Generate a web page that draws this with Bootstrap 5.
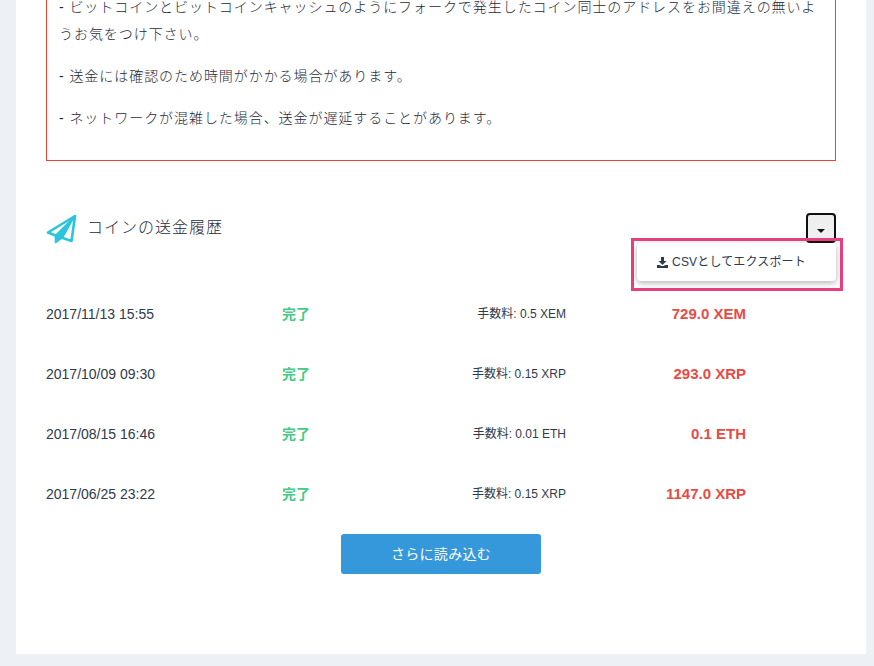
<!DOCTYPE html>
<html lang="ja">
<head>
<meta charset="utf-8">
<title>コインの送金履歴</title>
<link rel="stylesheet" href="https://cdn.jsdelivr.net/npm/bootstrap@5.3.0/dist/css/bootstrap.min.css">
<style>
html,body{height:666px;overflow:hidden}
body{background:#edf1f6;font-family:"Liberation Sans","Noto Sans CJK JP",sans-serif;color:#2f3a4a}
.sheet{background:#fff;margin:-40px 8px 0 16px;height:694px;padding:0 30px}
.notice{border:1px solid #ea4335;height:201px;padding:33px 12px 0;font-size:14px;letter-spacing:.94px;line-height:27px;font-weight:300;color:#1f2a3a}
.notice p{margin:0 0 15px}
.hist-head{height:71px;margin-top:52px;position:relative}
.hist-title{font-size:16px;letter-spacing:1px;margin-left:9px;margin-top:3px;color:#1f2a3a;font-weight:300;line-height:24px}
.caret-btn{width:30px;height:30px;background:#efefef;border:2px solid #111;border-radius:4px;padding:0;position:absolute;right:0;top:0}
.caret-btn::after{content:"";display:block;margin:5px auto 0;width:0;height:0;border-left:4px solid transparent;border-right:4px solid transparent;border-top:4px solid #111}
.highlight{position:absolute;left:585px;top:25px;width:212px;height:53px;border:3px solid #e8407f;z-index:2}
.csv-menu{position:absolute;left:3px;top:2px;width:199px;height:38px;background:#fff;border-radius:4px;box-shadow:0 2px 6px rgba(0,0,0,.3);font-size:12px;letter-spacing:.15px;color:#2f3a4a;padding-right:10px}
.tx-row{height:60px;font-size:14px;color:#2f3a4a}
.c-date{width:236px}
.c-status{width:100px;color:#46cb84;font-weight:700}
.c-fee{width:184px;text-align:right;font-size:12px}
.c-amt{width:180px;text-align:right;color:#ea4a45;font-weight:700;font-size:15px}
.more-btn{width:200px;height:40px;background:#3498db;border:0;border-radius:3px;color:#fff;font-size:14px;letter-spacing:.3px;margin-top:10px}
.more-btn:hover{background:#3498db;color:#fff}
</style>
</head>
<body>
<div class="sheet">
  <div class="notice">
    <p>- ビットコインとビットコインキャッシュのようにフォークで発生したコイン同士のアドレスをお間違えの無いようお気をつけ下さい。</p>
    <p>- 送金には確認のため時間がかかる場合があります。</p>
    <p>- ネットワークが混雑した場合、送金が遅延することがあります。</p>
  </div>
  <div class="hist-head d-flex align-items-start">
    <svg width="32" height="32" viewBox="0 0 32 32" fill="none" stroke="#2bc4dc" stroke-width="2.6" stroke-linejoin="round" aria-hidden="true">
      <path d="M29 3 L2 19.500 L9.500 22.500 L25.500 28 Z"/>
      <path d="M28 4 L9.500 22.500 L9.500 29.500 L16.500 24.500 Z" fill="#2bc4dc" stroke-width="1.6"/>
    </svg>
    <span class="hist-title">コインの送金履歴</span>
    <button class="caret-btn" type="button" aria-label="menu"></button>
    <div class="highlight">
      <div class="csv-menu d-flex align-items-center justify-content-center gap-1">
        <svg width="11" height="11" viewBox="0 0 11 11" fill="#2f3a4a" aria-hidden="true"><path d="M4 0h3v4h2.500L5.500 8 1.500 4H4z"/><path d="M0 8h3l1 1h3l1-1h3v3H0z"/></svg>
        <span>CSVとしてエクスポート</span>
      </div>
    </div>
  </div>
  <div class="tx-list">
    <div class="tx-row d-flex align-items-center"><div class="c-date">2017/11/13 15:55</div><div class="c-status">完了</div><div class="c-fee">手数料: 0.5 XEM</div><div class="c-amt">729.0 XEM</div></div>
    <div class="tx-row d-flex align-items-center"><div class="c-date">2017/10/09 09:30</div><div class="c-status">完了</div><div class="c-fee">手数料: 0.15 XRP</div><div class="c-amt">293.0 XRP</div></div>
    <div class="tx-row d-flex align-items-center"><div class="c-date">2017/08/15 16:46</div><div class="c-status">完了</div><div class="c-fee">手数料: 0.01 ETH</div><div class="c-amt">0.1 ETH</div></div>
    <div class="tx-row d-flex align-items-center"><div class="c-date">2017/06/25 23:22</div><div class="c-status">完了</div><div class="c-fee">手数料: 0.15 XRP</div><div class="c-amt">1147.0 XRP</div></div>
  </div>
  <div class="text-center"><button class="btn more-btn" type="button">さらに読み込む</button></div>
</div>
</body>
</html>
